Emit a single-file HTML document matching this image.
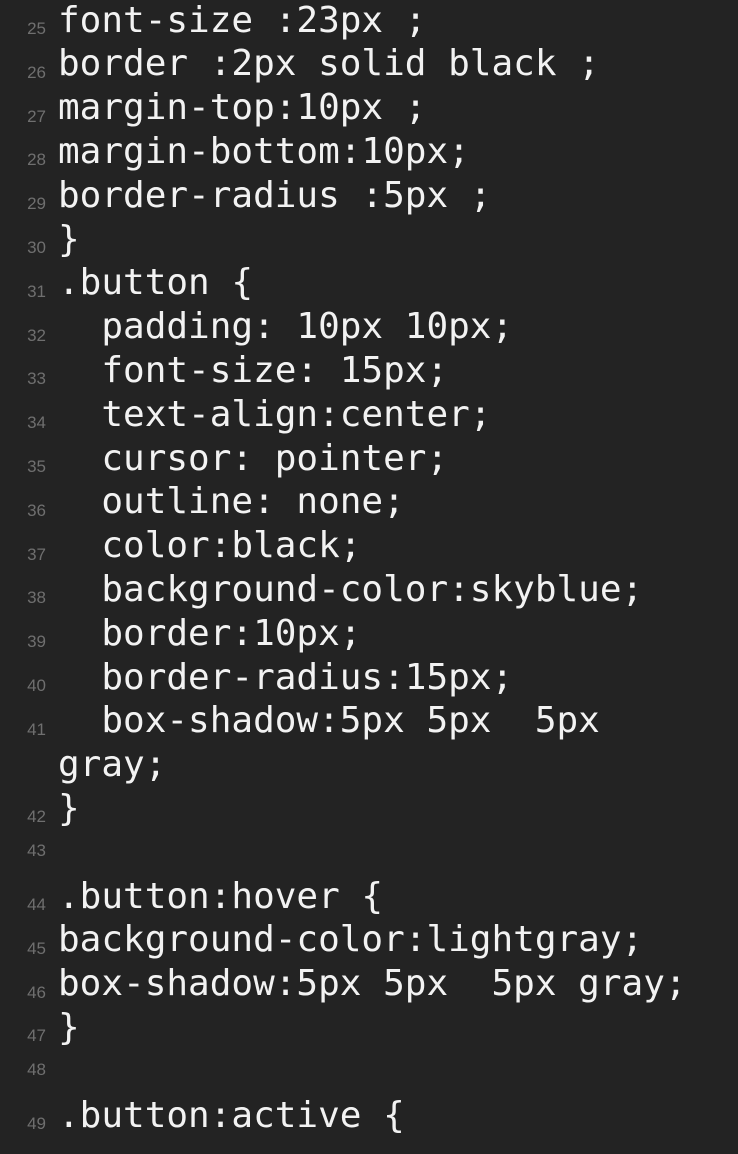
<!DOCTYPE html>
<html><head><meta charset="utf-8"><style>
html,body{margin:0;padding:0;width:738px;height:1154px;background:#232323;overflow:hidden}
.n{position:absolute;right:692px;top:0;font:17px "Liberation Sans",sans-serif;color:#6f6f6f;line-height:17px;white-space:nowrap}
.t{position:absolute;left:58px;top:0;font:36px "DejaVu Sans Mono",monospace;color:#f2f2f2;line-height:36px;white-space:pre}
</style></head><body>
<div id="c"></div>
<script>
var L=[["25","font-size :23px ;"],["26","border :2px solid black ;"],["27","margin-top:10px ;"],["28","margin-bottom:10px;"],["29","border-radius :5px ;"],["30","}"],["31",".button {"],["32","  padding: 10px 10px;"],["33","  font-size: 15px;"],["34","  text-align:center;"],["35","  cursor: pointer;"],["36","  outline: none;"],["37","  color:black;"],["38","  background-color:skyblue;"],["39","  border:10px;"],["40","  border-radius:15px;"],["41","  box-shadow:5px 5px  5px"],["","gray;"],["42","}"],["43",""],["44",".button:hover {"],["45","background-color:lightgray;"],["46","box-shadow:5px 5px  5px gray;"],["47","}"],["48",""],["49",".button:active {"]];
var h="";
for(var i=0;i<L.length;i++){
 var b=33+i*43.8;
 var nt=L[i][1]===""?b-23:b-13;
 h+='<div class="t" style="top:'+(b-30.5)+'px">'+L[i][1]+'</div>';
 if(L[i][0])h+='<div class="n" style="top:'+nt+'px">'+L[i][0]+'</div>';
}
document.getElementById("c").innerHTML=h;
</script>
</body></html>
